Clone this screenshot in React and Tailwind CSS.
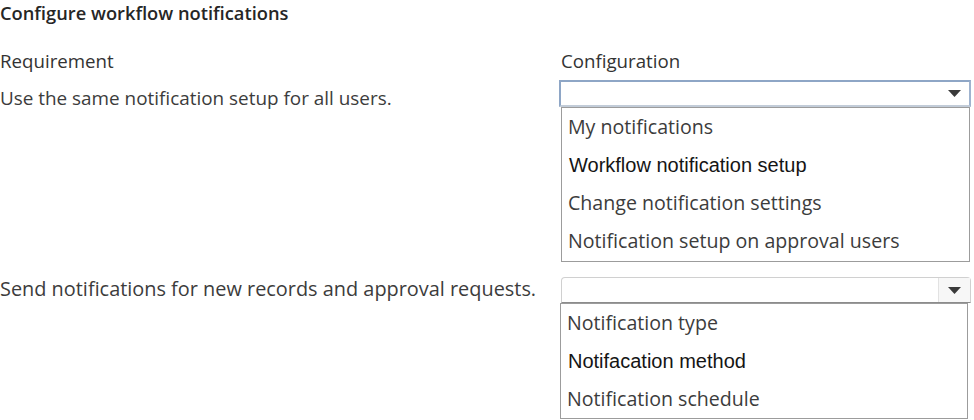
import React from "react";

const segoe = { fontFamily: '"Open Sans", "Noto Sans", sans-serif' };
const arial = { fontFamily: '"Liberation Sans", Arial, sans-serif' };

const Arrow = () => (
  <svg width="13" height="7" viewBox="0 0 13 7" className="block">
    <path d="M0 0 H13 L6.5 7 Z" fill="#3a3a3a" />
  </svg>
);

function Option({ label, font }) {
  const isArial = font === "arial";
  return (
    <div
      className={
        isArial
          ? "h-[38px] flex items-center pl-[7px] text-[20px] text-[#151515]"
          : "h-[38px] flex items-center pl-[6px] text-[19.6px] text-[#3c3c3c]"
      }
      style={isArial ? arial : segoe}
    >
      {label}
    </div>
  );
}

export default function App() {
  const first = [
    { label: "My notifications" },
    { label: "Workflow notification setup", font: "arial" },
    { label: "Change notification settings" },
    { label: "Notification setup on approval users" },
  ];
  const second = [
    { label: "Notification type" },
    { label: "Notifacation method", font: "arial" },
    { label: "Notification schedule" },
  ];

  return (
    <div className="w-[974px] h-[420px] bg-white overflow-hidden text-[#3c3c3c]" style={segoe}>
      <div className="h-[25px] leading-[25px] text-[18.3px] font-semibold text-[#262626]">
        Configure workflow notifications
      </div>

      <div className="mt-[25px] grid grid-cols-[559px_412px] h-[22px] leading-[22px] text-[18.7px] font-medium text-[#333]">
        <div>Requirement</div>
        <div className="pl-[2px]">Configuration</div>
      </div>

      {/* row 1 */}
      <div className="mt-[8px] grid grid-cols-[559px_412px]">
        <div className="pt-[6px] leading-[24px] text-[18.9px]">
          Use the same notification setup for all users.
        </div>
        <div className="flex flex-col">
          <div className="h-[27px] border-2 border-[#8ea6c6] border-b-[#c2ccd8] border-r-[#9fb3cf] flex items-center justify-end pr-[8px]">
            <Arrow />
          </div>
          <div className="ml-[2px] mr-[1px] h-[155px] border border-[#9c9c9c]">
            {first.map((o) => (
              <Option key={o.label} {...o} />
            ))}
          </div>
        </div>
      </div>

      {/* row 2 */}
      <div className="mt-[15px] grid grid-cols-[559px_412px]">
        <div className="leading-[24px] text-[19.9px]">
          Send notifications for new records and approval requests.
        </div>
        <div className="flex flex-col">
          <div className="ml-[2px] h-[26px] rounded-t-[4px] border border-[#d0d0d0] border-b-[#8c8c8c] flex justify-end">
            <div className="w-[32px] border-l border-[#e2e2e2] bg-[#f7f7f7] flex items-center justify-center">
              <Arrow />
            </div>
          </div>
          <div className="ml-[1px] mr-[3px] h-[116px] border border-[#9c9c9c]">
            {second.map((o) => (
              <Option key={o.label} {...o} />
            ))}
          </div>
        </div>
      </div>
    </div>
  );
}
